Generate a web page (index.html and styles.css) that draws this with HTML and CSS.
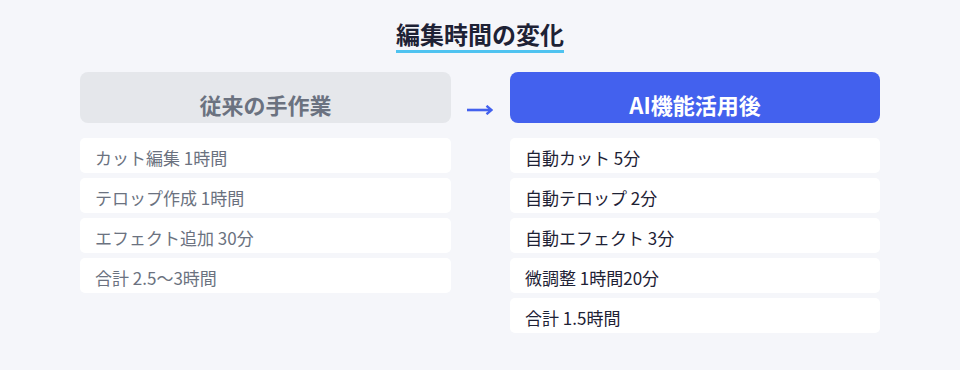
FILE: index.html
```html
<!DOCTYPE html>
<html lang="ja">
<head>
<meta charset="utf-8">
<link rel="stylesheet" href="styles.css">
</head>
<body>
<div class="page">
  <h1 class="title"><span class="title-text">編集時間の変化</span></h1>
  <div class="compare">
    <div class="col col-before">
      <div class="head head-before">従来の手作業</div>
      <div class="item">カット編集 1時間</div>
      <div class="item">テロップ作成 1時間</div>
      <div class="item">エフェクト追加 30分</div>
      <div class="item">合計 2.5〜3時間</div>
    </div>
    <div class="arrow">
      <svg width="26" height="10" viewBox="0 0 26 10" aria-hidden="true">
        <path d="M0 5 H24" stroke="#4361ee" stroke-width="2.6" fill="none"/>
        <path d="M19.5 0.8 L24.5 5 L19.5 9.2" stroke="#4361ee" stroke-width="2.4" fill="none" stroke-linejoin="miter"/>
      </svg>
    </div>
    <div class="col col-after">
      <div class="head head-after">AI機能活用後</div>
      <div class="item">自動カット 5分</div>
      <div class="item">自動テロップ 2分</div>
      <div class="item">自動エフェクト 3分</div>
      <div class="item">微調整 1時間20分</div>
      <div class="item">合計 1.5時間</div>
    </div>
  </div>
</div>
</body>
</html>
```
FILE: styles.css
```css
* { box-sizing: border-box; margin: 0; padding: 0; }
html, body { width: 960px; height: 370px; }
body {
  background: #f5f6fa;
  font-family: "Noto Sans CJK JP", "Noto Sans", sans-serif;
  overflow: hidden;
}
.page {
  display: flex;
  flex-direction: column;
  align-items: center;
  padding-top: 18px;
}
.title {
  font-size: 24px;
  font-weight: 700;
  color: #1e2235;
  line-height: 34px;
  display: flex;
}
.title-text {
  display: block;
  border-bottom: 3px solid #4fc3f0;
  line-height: 32px;
}
.compare {
  width: 800px;
  margin-top: 19px;
  display: grid;
  grid-template-columns: 371px 59px 370px;
  align-items: start;
}
.col {
  display: flex;
  flex-direction: column;
  gap: 5px;
}
.head {
  height: 51px;
  border-radius: 8px;
  font-size: 22px;
  font-weight: 700;
  text-align: center;
  line-height: 30px;
  padding-top: 17px;
  margin-bottom: 10px;
}
.head-before { background: #e5e7eb; color: #6b7280; }
.head-after { background: #4361ee; color: #ffffff; }
.arrow {
  display: flex;
  justify-content: center;
  padding-top: 33px;
  padding-right: 1px;
}
.arrow svg { display: block; }
.item {
  height: 35px;
  background: #ffffff;
  border-radius: 5px;
  font-size: 17px;
  line-height: 24px;
  padding: 8px 15px 0;
  overflow: hidden;
  white-space: nowrap;
}
.col-before .item { color: #6b7280; }
.col-after .item { color: #1e2235; }
```
